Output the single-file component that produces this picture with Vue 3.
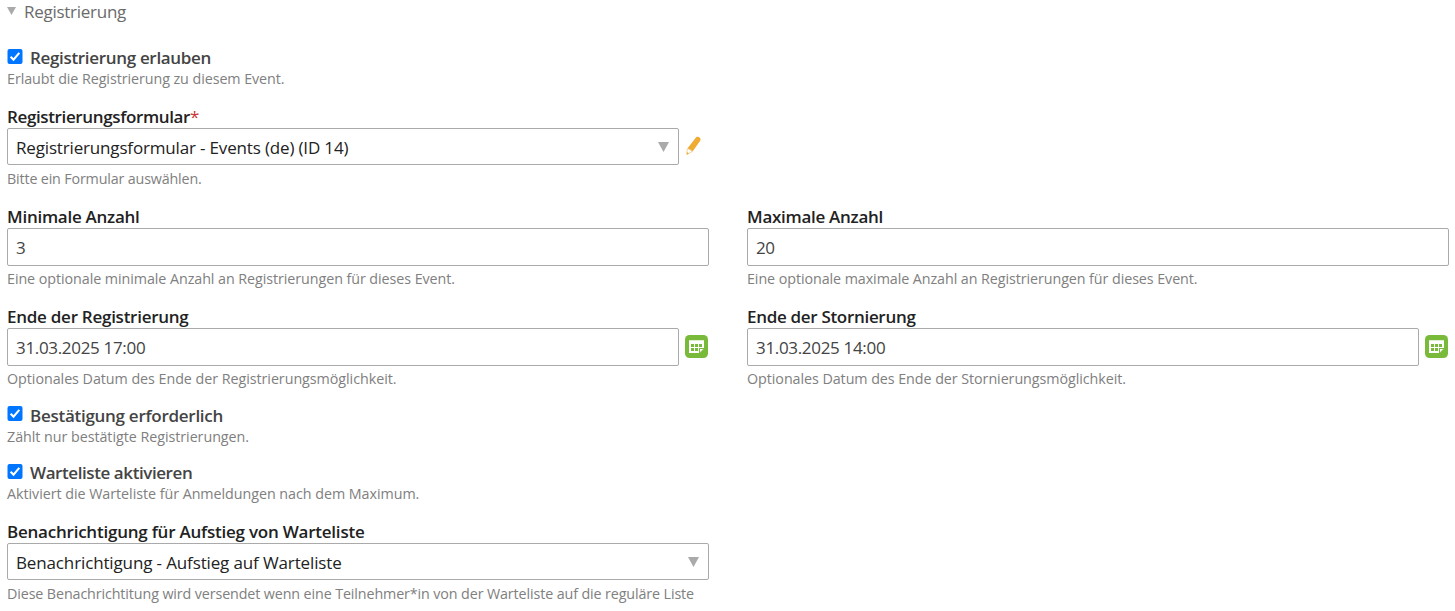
<script setup>
import { ref } from 'vue'

// Tracks a line of text so that it fills the given width in pixels.
const vFit = {
  mounted(el, { value }) {
    const natural = el.getBoundingClientRect().width
    el.style.letterSpacing = `${(value - natural) / el.textContent.length}px`
  },
}

const allow = ref(true)
const confirm = ref(true)
const waitlist = ref(true)

const pairs = [
  [
    { label: 'Minimale Anzahl', lw: 132.6, value: '3', vw: 9.3, help: 'Eine optionale minimale Anzahl an Registrierungen für dieses Event.', hw: 448 },
    { label: 'Maximale Anzahl', lw: 136, value: '20', vw: 18.5, help: 'Eine optionale maximale Anzahl an Registrierungen für dieses Event.', hw: 450.5 },
  ],
  [
    { label: 'Ende der Registrierung', lw: 181.5, value: '31.03.2025 17:00', vw: 129.3, help: 'Optionales Datum des Ende der Registrierungsmöglichkeit.', hw: 389.5, date: true },
    { label: 'Ende der Stornierung', lw: 168.5, value: '31.03.2025 14:00', vw: 129.3, help: 'Optionales Datum des Ende der Stornierungsmöglichkeit.', hw: 379, date: true },
  ],
]
</script>

<template>
  <form class="panel">
    <div class="legend">
      <svg class="fold" width="9" height="8" viewBox="0 0 9 8"><path d="M0 0H9L4.5 8Z" fill="#aaa" /></svg>
      <span v-fit="102">Registrierung</span>
    </div>

    <div class="group check first">
      <label class="tick">
        <input v-model="allow" type="checkbox" />
        <svg class="box" width="16" height="15" viewBox="0 0 16 15"><rect x=".5" width="15" height="15" rx="2" fill="#0075ff" /><path d="M3.6 7.8L6.5 10.6L12.3 3.9" fill="none" stroke="#fff" stroke-width="2.1" /></svg>
        <span v-fit="181">Registrierung erlauben</span>
      </label>
      <p class="help"><span v-fit="277.5">Erlaubt die Registrierung zu diesem Event.</span></p>
    </div>

    <div class="group half form-select">
      <label class="name"><span v-fit="183">Registrierungsformular</span><span class="req">*</span></label>
      <div class="line">
        <div class="control select">
          <span v-fit="332.3">Registrierungsformular - Events (de) (ID 14)</span>
          <svg class="arrow" width="11" height="10" viewBox="0 0 11 10"><path d="M0 0H11L5.5 10Z" fill="#aaa" /></svg>
        </div>
        <svg class="pencil" width="16" height="20" viewBox="0 0 16 20">
          <path d="M9.7 1.8Q11 0.1 13 1.1Q15.3 2.6 14.4 4.4L6.6 15.5L1.4 12.4Z" fill="#eeac35" />
          <path d="M1.1 13.1Q2.1 12.3 3.1 13.4Q4.6 13.1 4.8 14.5Q6.2 14.6 5.9 15.8L0.9 18.5Z" fill="#fff" stroke="#efc276" stroke-width=".7" />
          <path d="M.9 16L3 17.2L.8 18.8Z" fill="#eeac35" />
        </svg>
      </div>
      <p class="help"><span v-fit="194.6">Bitte ein Formular auswählen.</span></p>
    </div>

    <div v-for="(pair, i) in pairs" :key="i" class="columns">
      <div v-for="f in pair" :key="f.label" class="group">
        <label class="name"><span v-fit="f.lw">{{ f.label }}</span></label>
        <div class="line">
          <div class="control input"><span v-fit="f.vw">{{ f.value }}</span></div>
          <svg v-if="f.date" class="calendar" width="23" height="23" viewBox="0 0 23 23">
            <rect width="23" height="23" rx="4.5" fill="#7aba3a" />
            <path d="M4 5.3H19V14L15.3 18H4Z" fill="#fff" />
            <path d="M6 9H9V12H6ZM10 9H13V12H10ZM14 9H17V12H14ZM6 13H9V16H6ZM10 13H13V16H10Z" fill="#7aba3a" />
            <path d="M14 13H19.2V14L15.3 18.2H14Z" fill="#7aba3a" />
            <path d="M15 14H18.2L15 17.3Z" fill="#fff" />
          </svg>
        </div>
        <p class="help"><span v-fit="f.hw">{{ f.help }}</span></p>
      </div>
    </div>

    <div class="group check second">
      <label class="tick">
        <input v-model="confirm" type="checkbox" />
        <svg class="box" width="16" height="15" viewBox="0 0 16 15"><rect x=".5" width="15" height="15" rx="2" fill="#0075ff" /><path d="M3.6 7.8L6.5 10.6L12.3 3.9" fill="none" stroke="#fff" stroke-width="2.1" /></svg>
        <span v-fit="193">Bestätigung erforderlich</span>
      </label>
      <p class="help"><span v-fit="242">Zählt nur bestätigte Registrierungen.</span></p>
    </div>

    <div class="group check third">
      <label class="tick">
        <input v-model="waitlist" type="checkbox" />
        <svg class="box" width="16" height="15" viewBox="0 0 16 15"><rect x=".5" width="15" height="15" rx="2" fill="#0075ff" /><path d="M3.6 7.8L6.5 10.6L12.3 3.9" fill="none" stroke="#fff" stroke-width="2.1" /></svg>
        <span v-fit="162.3">Warteliste aktivieren</span>
      </label>
      <p class="help"><span v-fit="412.3">Aktiviert die Warteliste für Anmeldungen nach dem Maximum.</span></p>
    </div>

    <div class="group half">
      <label class="name"><span v-fit="357.5">Benachrichtigung für Aufstieg von Warteliste</span></label>
      <div class="line">
        <div class="control select">
          <span v-fit="325.6">Benachrichtigung - Aufstieg auf Warteliste</span>
          <svg class="arrow" width="11" height="10" viewBox="0 0 11 10"><path d="M0 0H11L5.5 10Z" fill="#aaa" /></svg>
        </div>
      </div>
      <p class="help"><span v-fit="687">Diese Benachrichtitung wird versendet wenn eine Teilnehmer*in von der Warteliste auf die reguläre Liste</span></p>
    </div>
  </form>
</template>

<style>
html,
body {
  background: #fff;
  overflow: hidden;
}
</style>

<style scoped>
.panel {
  box-sizing: border-box;
  height: 611px;
  padding: 0 6px 0 7px;
  overflow: hidden;
  font: 17px/22px "Open Sans", "Noto Sans", sans-serif;
  color: #222;
  white-space: nowrap;
}
.panel span {
  display: inline-block;
}
.legend {
  display: flex;
  align-items: flex-start;
  gap: 8px;
  height: 47px;
  padding-top: 1px;
  box-sizing: border-box;
  color: #6b6b6b;
}
.fold {
  margin-top: 6px;
}
.check {
  height: 57px;
}
.check.first {
  height: 59px;
}
.check.third {
  height: 59px;
}
.tick {
  display: flex;
  gap: 7px;
  height: 22px;
  font-weight: 600;
  color: #444;
}
.tick input {
  position: absolute;
  opacity: 0;
}
.box {
  margin-top: 2px;
}
.second .box {
  margin-top: 1px;
}
.name {
  display: flex;
  height: 22px;
  font-weight: 600;
  color: #222;
}
.req {
  font-weight: 400;
  color: #c33;
}
.columns {
  display: grid;
  grid-template-columns: 702px 702px;
  column-gap: 38px;
  height: 100px;
}
.columns + .columns {
  height: 99px;
}
.half {
  width: 702px;
}
.form-select {
  height: 100px;
}
.line {
  display: flex;
  height: 38px;
}
.control {
  display: flex;
  align-items: center;
  justify-content: space-between;
  flex: 1;
  box-sizing: border-box;
  height: 38px;
  padding: 0 9px 0 8px;
  border: 1px solid #aaa;
  border-radius: 2px;
  color: #444;
}
.control span {
  padding-top: 2px;
}
.select {
  height: 37px;
  color: #222;
}
.pencil {
  margin: 8px 7px 0 7px;
}
.calendar {
  margin: 7px 1px 0 6px;
}
.help {
  height: 20px;
  margin: 3px 0 0;
  font-size: 14.3px;
  line-height: 20px;
  color: #808080;
}
.check .help {
  margin: 0;
}
</style>
